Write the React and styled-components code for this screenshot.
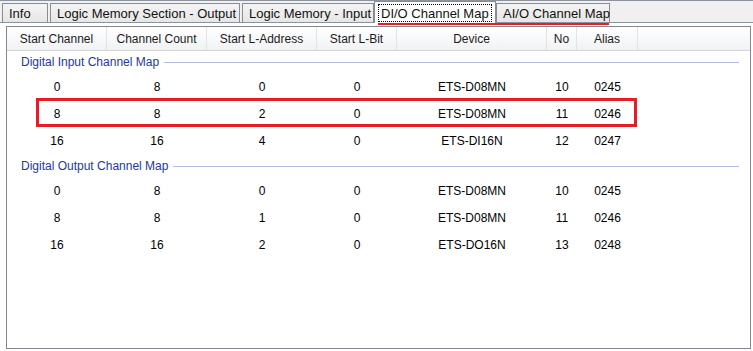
import React from 'react';
import styled, { createGlobalStyle } from 'styled-components';

const GlobalStyle = createGlobalStyle`
  html, body {
    margin: 0;
    padding: 0;
    background: #ffffff;
  }
  body {
    font-family: "Liberation Sans", Arial, sans-serif;
  }
`;

const Page = styled.div`
  width: 753px;
  height: 351px;
  overflow: hidden;
  background: #ffffff;
`;

const TabStrip = styled.div`
  position: relative;
  display: flex;
  align-items: flex-end;
  height: 21px;
  padding-left: 2px;
  background: #f0f0f0;
  border-top: 1px solid #8d939c;
  border-bottom: 1px solid #8d939c;
`;

const Tab = styled.div`
  box-sizing: border-box;
  width: ${p => p.$w}px;
  margin-left: ${p => p.$ml}px;
  height: ${p => (p.$active ? 22 : 19)}px;
  margin-bottom: ${p => (p.$active ? -1 : 0)}px;
  display: flex;
  align-items: center;
  padding: 0 ${p => (p.$active ? 4 : 6)}px;
  border: 1px solid #898c95;
  border-bottom: none;
  background: ${p => (p.$active ? '#ffffff' : 'linear-gradient(#f4f4f4, #e6e6e6)')};
  font-size: 13px;
  color: #111111;
  white-space: nowrap;
  position: relative;
  z-index: ${p => (p.$active ? 1 : 0)};
`;

const FocusLabel = styled.span`
  outline: 1px dotted #000000;
  outline-offset: 0;
  padding: 1px 2px 0;
  line-height: 15px;
`;

const Underline = styled.div`
  position: absolute;
  left: 378px;
  width: 231px;
  bottom: -3px;
  height: 2px;
  background: #e81c24;
  z-index: 2;
`;

const ListView = styled.div`
  box-sizing: border-box;
  margin: 3px 0 0 6px;
  width: 745px;
  height: 323px;
  border: 1px solid #828790;
  background: #ffffff;
`;

const columns = '100px 100px 110px 80px 150px 30px 61px 1fr';

const HeaderRow = styled.div`
  display: grid;
  grid-template-columns: ${columns};
  height: 23px;
  background: linear-gradient(#ffffff, #f1f2f4);
  border-bottom: 1px solid #d5d5d5;
`;

const HeaderCell = styled.div`
  display: flex;
  align-items: center;
  justify-content: center;
  font-size: 12px;
  color: #1b1b1b;
  border-right: ${p => (p.$filler ? 'none' : '1px solid #e1e4e9')};
  padding-top: 1px;
`;

const Group = styled.div`
  & + & {
    margin-top: 1px;
  }
`;

const GroupHeader = styled.div`
  display: flex;
  align-items: center;
  gap: 5px;
  height: 22px;
  padding: 0 11px 0 14px;
  font-size: 12px;
  color: #2238a8;
`;

const GroupLine = styled.div`
  flex: 1;
  height: 1px;
  background: #b4bde0;
`;

const Row = styled.div`
  position: relative;
  display: grid;
  grid-template-columns: ${columns};
  height: 27px;
  align-items: center;

  ${p =>
    p.$marked &&
    `
    &::after {
      content: '';
      position: absolute;
      left: 29px;
      width: 601px;
      top: -2px;
      bottom: 0;
      border: 3px solid #e81c24;
      box-sizing: border-box;
    }
  `}
`;

const Cell = styled.div`
  text-align: center;
  font-size: 12px;
  color: #000000;
`;

const tabs = [
  { label: 'Info', w: 46, ml: 0 },
  { label: 'Logic Memory Section - Output', w: 190, ml: 2 },
  { label: 'Logic Memory - Input', w: 132, ml: 2 },
  { label: 'DI/O Channel Map', w: 122, ml: 0, active: true },
  { label: 'AI/O Channel Map', w: 114, ml: 0 },
];

const headers = ['Start Channel', 'Channel Count', 'Start L-Address', 'Start L-Bit', 'Device', 'No', 'Alias'];

const groups = [
  {
    title: 'Digital Input Channel Map',
    rows: [
      ['0', '8', '0', '0', 'ETS-D08MN', '10', '0245'],
      ['8', '8', '2', '0', 'ETS-D08MN', '11', '0246', true],
      ['16', '16', '4', '0', 'ETS-DI16N', '12', '0247'],
    ],
  },
  {
    title: 'Digital Output Channel Map',
    rows: [
      ['0', '8', '0', '0', 'ETS-D08MN', '10', '0245'],
      ['8', '8', '1', '0', 'ETS-D08MN', '11', '0246'],
      ['16', '16', '2', '0', 'ETS-DO16N', '13', '0248'],
    ],
  },
];

function App() {
  return (
    <Page>
      <GlobalStyle />
      <TabStrip>
        {tabs.map(t => (
          <Tab key={t.label} $w={t.w} $ml={t.ml} $active={t.active}>
            {t.active ? <FocusLabel>{t.label}</FocusLabel> : t.label}
          </Tab>
        ))}
        <Underline />
      </TabStrip>
      <ListView>
        <HeaderRow>
          {headers.map(h => (
            <HeaderCell key={h}>{h}</HeaderCell>
          ))}
          <HeaderCell $filler />
        </HeaderRow>
        {groups.map(g => (
          <Group key={g.title}>
            <GroupHeader>
              {g.title}
              <GroupLine />
            </GroupHeader>
            {g.rows.map((r, i) => (
              <Row key={i} $marked={r[7]}>
                {r.slice(0, 7).map((c, j) => (
                  <Cell key={j}>{c}</Cell>
                ))}
              </Row>
            ))}
          </Group>
        ))}
      </ListView>
    </Page>
  );
}

export default App;
